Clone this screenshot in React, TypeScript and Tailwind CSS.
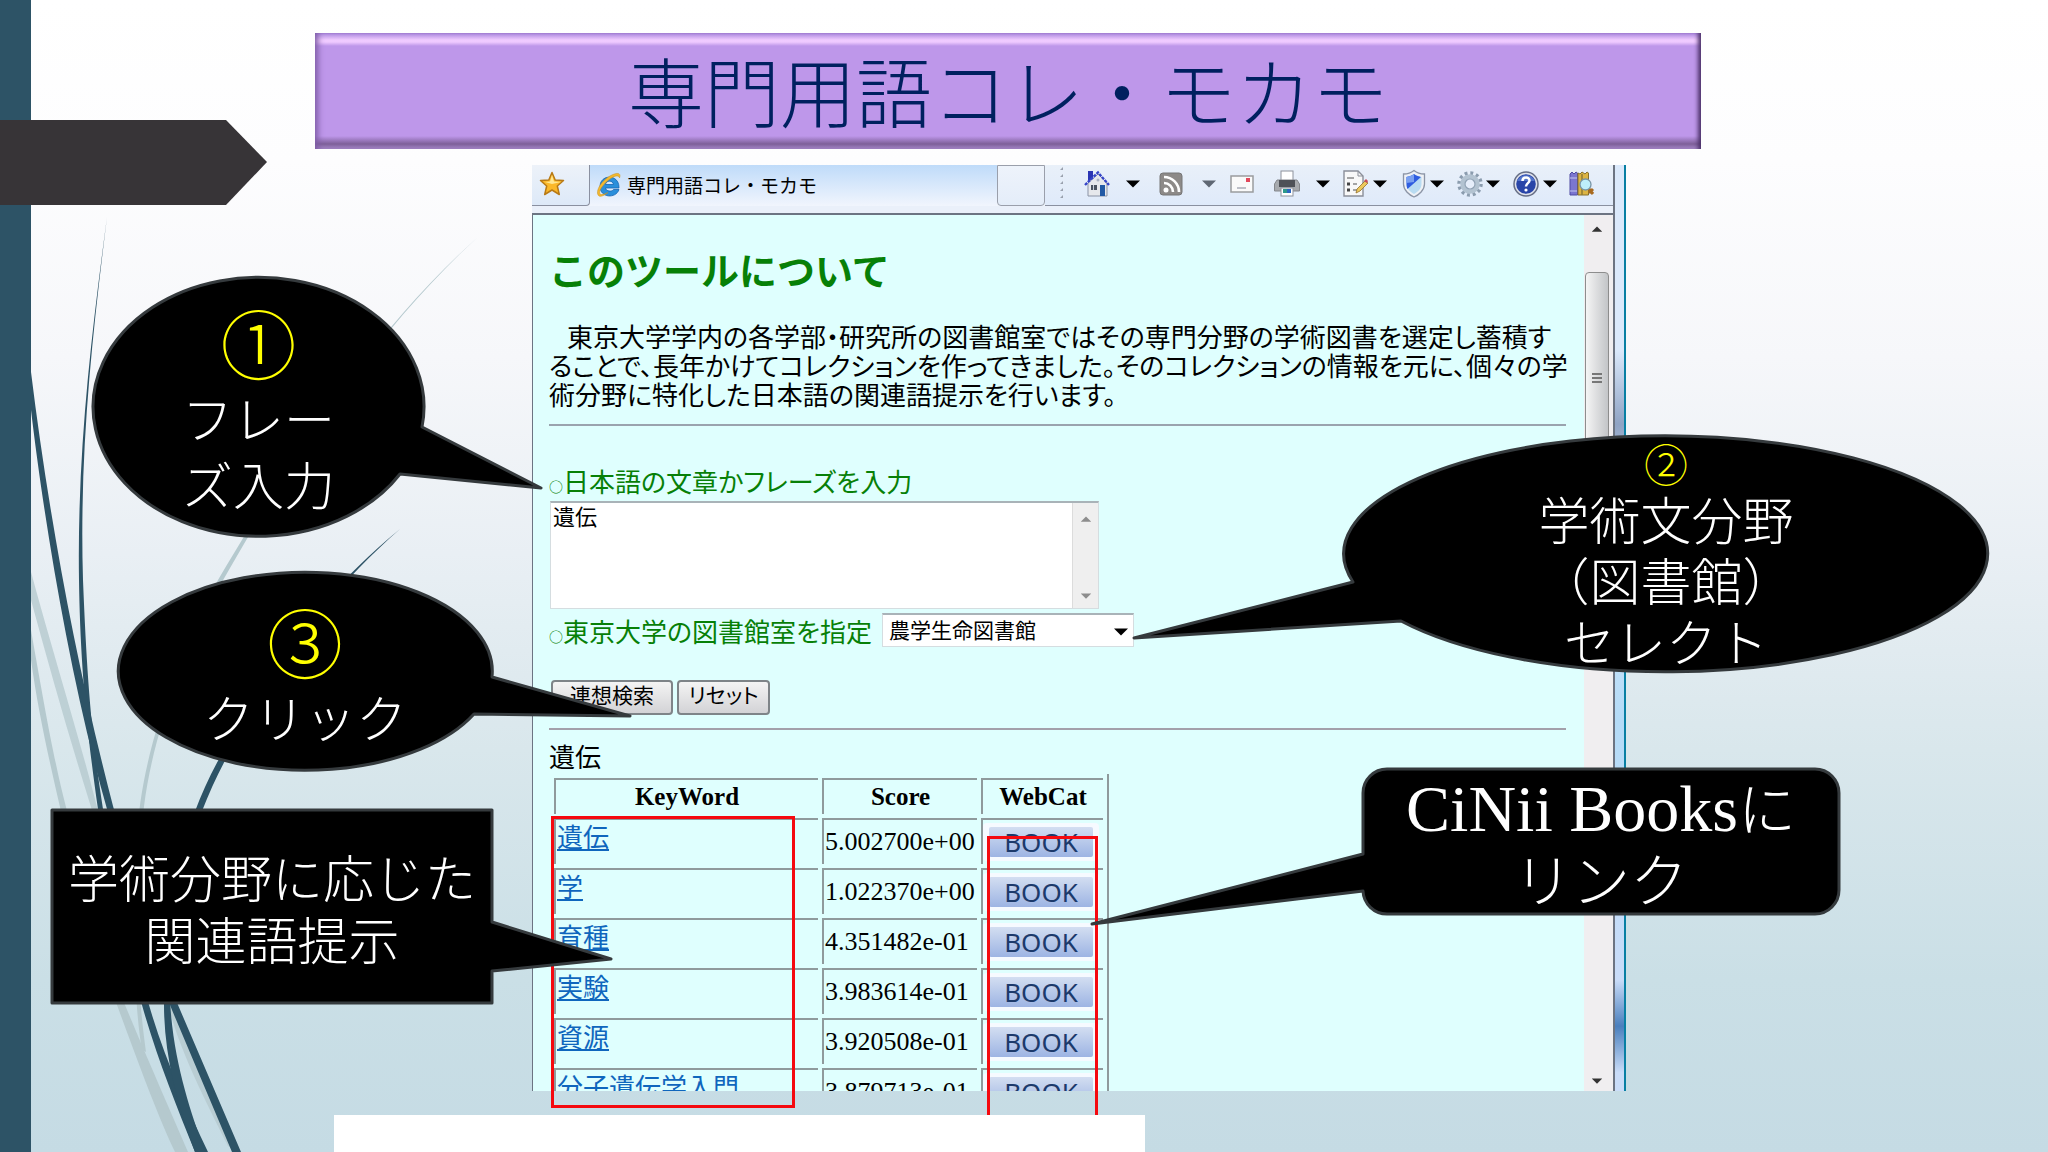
import type { ReactNode } from "react";

const jp = "font-['Noto_Sans_CJK_JP',sans-serif]";

function Caret({ className = "" }: { className?: string }) {
  return (
    <svg className={`block h-2 w-3.5 shrink-0 ${className}`} viewBox="0 0 14 8" aria-hidden="true">
      <path d="M0 0.5H14L7 7.5Z" fill="currentColor" />
    </svg>
  );
}

function Tool({ label, className = "", caret = "", caretColor = "text-black", children }: { label: string; className?: string; caret?: string; caretColor?: string; children: ReactNode }) {
  return (
    <button type="button" aria-label={label} className={`flex shrink-0 items-center ${className}`}>
      <svg className="block h-[30px] w-[26px]" viewBox="0 0 26 30" aria-hidden="true">{children}</svg>
      {caret && <Caret className={`${caret} ${caretColor}`} />}
    </button>
  );
}

function Toolbar() {
  return (
    <div className="flex shrink-0 items-center border-b border-[#8a90a0] bg-linear-to-b from-[#e9f0f9] to-[#dfeafa] pr-[18px] pb-[3px]">
      <svg className="ml-[15px] mr-5 block h-9 w-1" viewBox="0 0 4 36" aria-hidden="true">
        {[1, 8, 15, 22, 29].map((y) => <path key={y} d={`M3 ${y}V${y + 3}H0Z`} fill="#9aa1ae" />)}
      </svg>
      <Tool label="ホーム" caret="ml-4" className="mr-[18px]">
        <path d="M4 2H9V9L4 13Z" fill="#2a35b4" />
        <path d="M4 14L14 5L23 14V27H4Z" fill="#e6e8ec" stroke="#8b93a5" />
        <path d="M1 16L14 3.500L25 16" fill="none" stroke="#3544c8" strokeWidth="2.400" strokeDasharray="3 1" />
        <rect x="7" y="16" width="6" height="5" fill="#4a5260" />
        <rect x="9" y="16" width="1" height="5" fill="#c9d1dc" />
        <rect x="16" y="16" width="5" height="11" fill="#2159a5" />
        <circle cx="14" cy="11" r="1.500" fill="#aab2c2" />
      </Tool>
      <Tool label="フィード" caret="ml-[18px]" caretColor="text-[#5f6773]" className="mr-[13px]">
        <rect x="2" y="4" width="22" height="22" rx="3" fill="#8d8a88" stroke="#767676" />
        <circle cx="8" cy="21" r="2.500" fill="#fff" />
        <path d="M6 14A9 9 0 0 1 15 23M6 8A15 15 0 0 1 21 23" fill="none" stroke="#fff" strokeWidth="2.600" />
      </Tool>
      <Tool label="メール" className="mr-[19px]">
        <rect x="2" y="7" width="22" height="16" fill="#fafafa" stroke="#9a9c9e" strokeWidth="1.500" />
        <rect x="17" y="9" width="4" height="4" fill="#e2485c" />
        <path d="M8 19H17" stroke="#a8adb8" strokeWidth="1.500" />
      </Tool>
      <Tool label="印刷" caret="ml-4" className="mr-3">
        <rect x="7" y="2" width="12" height="12" fill="#fff" stroke="#8d929c" />
        <path d="M3 11H23L25.500 15V22H0.500V15Z" fill="#a7aaae" stroke="#84878c" />
        <rect x="5" y="11" width="16" height="7" fill="#4e5157" />
        <rect x="7" y="19" width="12" height="8" fill="#fff" stroke="#8d929c" />
        <rect x="9" y="20" width="4" height="4" fill="#2d9a8c" />
        <rect x="13" y="20" width="4" height="4" fill="#2c66c0" />
      </Tool>
      <Tool label="ページ" caret="ml-[5px]" className="mr-3.5">
        <path d="M2 2H16L21 7V27H2Z" fill="#f8f8f8" stroke="#8b8f99" strokeWidth="1.400" />
        <path d="M16 2V7H21" fill="none" stroke="#8b8f99" />
        <path d="M5 15H8M5 21H8" stroke="#444" strokeWidth="3" />
        <path d="M5 9H12M11 15H15M11 21H15" stroke="#888" strokeWidth="1.500" />
        <path d="M14 24L15 20L23 12L26 14L18 22Z" fill="#edc95d" stroke="#92702c" strokeWidth="0.800" />
        <path d="M22 12L24 10L26 12L25 14Z" fill="#c94b5c" />
      </Tool>
      <Tool label="セーフティ" caret="ml-[3px]" className="mr-[13px]">
        <path d="M13 1.500C16 4 20 5 23.500 5V15C23.500 21 18 26 13 28C8 26 2.500 21 2.500 15V5C6 5 10 4 13 1.500Z" fill="#eef1f6" stroke="#8c95a6" strokeWidth="1.300" />
        <path d="M13 5C15.500 7 18 7.500 20.500 8V15C20.500 20 16.500 23 13 25C9.500 23 5.500 20 5.500 15V8C8 7.500 10.500 7 13 5Z" fill="#b9dcf2" />
        <path d="M13 5C15.500 7 18 7.500 20 8L6.500 20C5.800 18 5.500 17 5.500 15V8C8 7.500 10.500 7 13 5Z" fill="#2f5de0" />
        <path d="M13 5V13L5.500 14V8C8 7.500 10.500 7 13 5Z" fill="#7aa0f0" />
      </Tool>
      <Tool label="ツール" caret="ml-[3px]" className="mr-[13px]">
        <circle cx="13" cy="15" r="11" fill="none" stroke="#8b9cae" strokeWidth="3.500" strokeDasharray="2.880 2.880" />
        <circle cx="13" cy="15" r="7.500" fill="#dfe8f1" stroke="#b3c3d1" strokeWidth="4.500" />
        <circle cx="13" cy="15" r="5" fill="#e6eefa" stroke="#8fa1b3" strokeWidth="1.200" />
      </Tool>
      <Tool label="ヘルプ" caret="ml-1" className="mr-3">
        <circle cx="13" cy="15" r="12" fill="#dfe2ea" stroke="#666e85" strokeWidth="1.500" />
        <circle cx="13" cy="15" r="9.800" fill="#2945a8" />
        <path d="M4 12A10 10 0 0 1 22 12Z" fill="#5274cb" />
        <path d="M9.500 12C9.500 7.500 16.500 7.500 16.500 11.500C16.500 14 13 14.500 13 17.500" fill="none" stroke="#fff" strokeWidth="2.500" />
        <circle cx="13" cy="21" r="1.600" fill="#fff" />
      </Tool>
      <Tool label="リサーチ">
        <path d="M1 5L3 3L5 5L7 3L8.500 4V26H1Z" fill="#7b76d0" stroke="#4e4ba3" />
        <path d="M1 9H8M1 22H8" stroke="#c5c8f2" />
        <path d="M9 4L11 5L13 3L16 5L18 3L19.500 4V26H9Z" fill="#dcb443" stroke="#85702f" />
        <path d="M13 5V26" stroke="#8f7a35" strokeWidth="1.500" />
        <path d="M20 20L24 25M24 20L20 24" stroke="#a86a1f" strokeWidth="3" />
        <circle cx="16.500" cy="15.500" r="5.500" fill="#bdeefa" stroke="#7894a5" strokeWidth="1.300" />
      </Tool>
    </div>
  );
}

function TabBar() {
  return (
    <div className="flex h-[41px] bg-[#f0f5fc]">
      <button type="button" aria-label="お気に入り" className="flex w-[58px] shrink-0 items-center rounded-br border-r border-b border-[#8a90a0] bg-linear-to-b from-[#edf2f9] to-[#dde9f8] pb-[3px] pl-[7px]">
        <svg className="block h-[26px] w-[26px]" viewBox="0 0 26 26" aria-hidden="true">
          <path d="M13 1.500L16.200 9L24.500 9.500L18.300 15L20.300 23.500L13 19L5.700 23.500L7.700 15L1.500 9.500L9.800 9Z" fill="#fbb829" stroke="#b87a16" strokeWidth="1.500" strokeLinejoin="round" />
          <path d="M13 4L15 10.500L22 11L13 13L6 11L11 10.500Z" fill="#ffe793" />
        </svg>
      </button>
      <div className="flex min-w-0 flex-1 items-center gap-[5px] bg-linear-to-b from-[#bfdbf9] to-[#f1f5fd] pb-0.5 pl-1.5 text-[19px] leading-7">
        <svg className="block h-[26px] w-[26px] shrink-0" viewBox="0 0 26 26" aria-hidden="true">
          <path d="M23 16H9.500C10 19.500 16 20 17.500 17.500H23C20 27 4 26 4 14.500C4 2 23.500 1.500 23 16ZM9.500 12.500H17.500C17 8 10 8 9.500 12.500Z" fill="#2a8fdb" stroke="#1765b1" strokeWidth="0.800" />
          <path d="M3 24C-2 20 6 7 17 2.500C23 0 25 2 23.500 6C23 2.500 18 3.500 12 8.500C5 14.500 1 22 5.500 22.500C8 22.500 10 21.500 12 20.500C8 23.500 5 25 3 24Z" fill="#f2b92f" stroke="#c98d16" strokeWidth="0.500" />
        </svg>
        <span className="whitespace-nowrap">専門用語コレ・モカモ</span>
      </div>
      <button type="button" aria-label="新しいタブ" className="w-12 shrink-0 rounded-b border border-[#9a9fab] bg-linear-to-b from-[#eef3fb] to-[#e4edf9]" />
      <Toolbar />
    </div>
  );
}

const rows = [
  ["遺伝", "5.002700e+00"],
  ["学", "1.022370e+00"],
  ["育種", "4.351482e-01"],
  ["実験", "3.983614e-01"],
  ["資源", "3.920508e-01"],
  ["分子遺伝学入門", "3.879713e-01"],
];

function Results() {
  return (
    <table className="mt-0.5 ml-px table-fixed border-separate border-spacing-1 border-r-2 border-[#8f9a9c] font-['Liberation_Serif',serif] text-[26px] leading-8">
      <colgroup>
        <col className="w-[264px]" />
        <col className="w-[155px]" />
        <col className="w-[122px]" />
      </colgroup>
      <thead>
        <tr className="h-9">
          {["KeyWord", "Score", "WebCat"].map((h) => (
            <th key={h} scope="col" className="border-t-2 border-l-2 border-[#8f9a9c] p-0 text-[25px] font-bold">{h}</th>
          ))}
        </tr>
      </thead>
      <tbody>
        {rows.map(([word, score]) => (
          <tr key={word} className="h-[46px]">
            <td className={`border-t-2 border-l-2 border-[#8f9a9c] px-px py-0 align-top ${jp}`}>
              <a href="#book" className="text-[#0f66bd] underline underline-offset-2">{word}</a>
            </td>
            <td className="border-t-2 border-l-2 border-[#8f9a9c] px-px py-0">{score}</td>
            <td className="border-t-2 border-l-2 border-[#8f9a9c] p-0">
              <div className="mr-1 rounded bg-[#f6faff] px-1.5 py-1">
                <a href="#book" className="block rounded-xs bg-linear-to-b from-[#d3def1] to-[#9db4e3] text-center font-['Noto_Sans',sans-serif] leading-[30px] text-[#1c3a6b]">BOOK</a>
              </div>
            </td>
          </tr>
        ))}
      </tbody>
    </table>
  );
}

function Page() {
  return (
    <div className="min-w-0 flex-1 overflow-hidden bg-[#dffffe] pt-[34px] pr-[18px] pl-4 text-[26px]">
      <h2 className="text-[38px] leading-10 font-bold text-[#078007]">このツールについて</h2>
      <p className="mt-8 leading-[29px] whitespace-nowrap [font-feature-settings:'palt']">
        <span className="pl-[18px]">東京大学学内の各学部・研究所の図書館室ではその専門分野の学術図書を選定し蓄積す</span><br />
        ることで、長年かけてコレクションを作ってきました。そのコレクションの情報を元に、個々の学<br />
        術分野に特化した日本語の関連語提示を行います。
      </p>
      <hr className="mt-4 border-t-2 border-[#9aa3ae]" />
      <form onSubmit={(e) => e.preventDefault()}>
        <label htmlFor="phrase" className="mt-[39px] block leading-8 text-[#078007] [font-feature-settings:'palt']">
          <span className="text-sm">○</span>日本語の文章かフレーズを入力
        </label>
        <div className="mt-1 ml-px flex h-[108px] w-[549px] border border-t-2 border-[#d5dde0] border-t-[#a9b3b8] bg-white">
          <textarea id="phrase" defaultValue="遺伝" className="min-w-0 flex-1 resize-none overflow-hidden px-0.5 text-[22px] leading-6 outline-none" />
          <div className="flex w-[26px] flex-col items-center justify-between border-l border-[#dcdcdc] bg-[#efefef] pt-3 pb-2 text-[#8d8d8d]">
            <Caret className="scale-75 rotate-180" />
            <Caret className="scale-75" />
          </div>
        </div>
        <div className="mt-1 flex h-[34px] items-center gap-2.5">
          <label htmlFor="library" className="text-[#078007] [font-feature-settings:'palt']"><span className="text-sm">○</span>東京大学の図書館室を指定</label>
          <div className="relative">
            <select id="library" className="block h-[34px] w-[252px] appearance-none border border-t-2 border-[#d5dde0] border-t-[#a9b3b8] bg-white pb-1 pl-1.5 text-[21px] leading-7">
              <option>農学生命図書館</option>
            </select>
            <Caret className="pointer-events-none absolute top-[15px] right-1.5" />
          </div>
        </div>
        <div className="mt-[33px] ml-0.5 flex h-[35px] gap-1 text-[21px] leading-6">
          <button type="submit" className="w-[122px] rounded border-2 border-[#7e8488] bg-linear-to-b from-[#f4f4f4] to-[#d3d3d6] pb-2">連想検索</button>
          <button type="reset" className="w-[93px] rounded border-2 border-[#7e8488] bg-linear-to-b from-[#f4f4f4] to-[#d3d3d6] pb-2 [font-feature-settings:'palt']">リセット</button>
        </div>
      </form>
      <hr className="mt-[13px] border-t-2 border-[#a3a0aa]" />
      <p className="mt-2.5 leading-8">遺伝</p>
      <Results />
    </div>
  );
}

function BrowserWindow() {
  return (
    <section className={`mt-4 mr-[422px] ml-[501px] flex min-h-0 flex-1 overflow-hidden ${jp} font-normal text-black`}>
      <div className="flex min-w-0 flex-1 flex-col">
        <TabBar />
        <div className="h-[7px] shrink-0 bg-[#eaf0fa]" />
        <div className="flex min-h-0 flex-1 border-t-2 border-l border-[#6c7482]">
          <Page />
          <div className="flex w-[29px] shrink-0 flex-col items-center bg-[#f0eef0] pt-2.5 pr-1">
            <Caret className="scale-75 rotate-180 text-[#333]" />
            <div className="mt-[39px] flex h-[212px] w-6 flex-col items-center justify-center gap-0.5 rounded-sm border border-[#8d8d8d] bg-linear-to-r from-[#f5f5f5] to-[#c3c5c8]">
              {[0, 1, 2].map((i) => <span key={i} className="h-0.5 w-2.5 bg-[#777]" />)}
            </div>
            <Caret className="mt-auto mb-1.5 scale-75 text-[#333]" />
          </div>
        </div>
      </div>
      <div className="w-[13px] shrink-0 border-r-2 border-l-2 border-r-[#087fa3] border-l-[#6c7482] bg-[linear-gradient(to_bottom,#dbe9fb_0%,#dbe9fb_20%,#8fa3c4_28%,#dbe9fb_38%,#b4dbf7_60%,#c9dcf8_88%,#4a7fbd_93%,#c9dcf8_98%)]" />
    </section>
  );
}

function Swooshes() {
  return (
    <svg className="pointer-events-none absolute top-0 left-0 h-[1152px] w-[560px]" viewBox="0 0 560 1152" aria-hidden="true">
      <g fill="#b5c9ce">
        <path d="M479 236C370 335 286 470 222 582C176 672 142 760 141 850C138 940 136 980 146 1052L142 1050C133 1000 134 920 137 840C140 760 172 670 218 580C284 468 369 334 479 236Z" />
        <path d="M31 572C55 660 80 740 97 807C115 870 145 950 175 1010C195 1060 215 1110 235 1150L228 1146C200 1090 180 1050 168 1005C140 940 110 880 91 807C70 740 50 670 31 600Z" fillOpacity=".8" />
        <path d="M31 630C45 710 55 765 66 807C80 870 100 950 125 1005C150 1065 170 1110 188 1152H175C155 1110 130 1040 117 1005C95 940 70 860 60 807C48 755 38 710 31 660Z" />
      </g>
      <g fill="#2d5366">
        <path d="M107 217C93 330 79 450 83 580C87 680 92 740 103 809C112 870 130 945 149 1005C165 1060 186 1105 208 1152H195C176 1105 156 1055 142 1005C122 945 105 870 98 809C85 720 80 650 79 580C77 450 92 330 107 217Z" />
        <path d="M31 372C48 510 75 660 113 806C134 880 152 944 178 1005L241 1152H232L172 1010C144 940 122 870 107 809C70 680 44 520 31 410Z" />
        <path d="M400 529C330 590 265 675 228 755C190 825 166 910 170 1000C173 1060 190 1110 205 1152H195C175 1100 164 1050 164 1005C161 915 183 820 223 752C263 672 325 590 400 529Z" />
      </g>
    </svg>
  );
}

function Callout({ box, viewBox, d, text, children }: { box: string; viewBox: string; d: string; text: string; children: ReactNode }) {
  return (
    <div className={`absolute ${box}`}>
      <svg className="absolute inset-0 h-full w-full overflow-visible" viewBox={viewBox} aria-hidden="true">
        <path d={d} fill="#000" stroke="#353a3d" strokeWidth="3" strokeLinejoin="round" />
      </svg>
      <div className={`relative flex flex-col items-center text-center whitespace-nowrap text-white ${text}`}>{children}</div>
    </div>
  );
}

export default function App() {
  return (
    <main className={`relative flex h-screen overflow-hidden bg-[linear-gradient(to_bottom,#ffffff_0%,#fdfdfe_14%,#f6f7fa_31%,#e9eff4_48%,#d9e7ec_65%,#cadfe6_85%,#c5dbe4_100%)] ${jp} font-light`}>
      <div className="w-[31px] shrink-0 bg-[#2d5366]" />
      <Swooshes />
      <svg className="absolute top-[120px] left-0 h-[85px] w-[268px]" viewBox="0 0 268 85" aria-hidden="true">
        <path d="M0 0H226L267 42L226 85H0Z" fill="#373437" />
      </svg>

      <div className="flex min-w-0 flex-1 flex-col">
        <h1 className="mt-[33px] mr-[347px] ml-[284px] bg-[linear-gradient(to_bottom,#a986dd_0px,#f0cbff_7px,#efcaff_9px,#be97ea_13px,#be97ea_calc(100%-13px),#7d5f98_calc(100%-5px),#a88aca_100%)] pt-2 pb-3 text-center text-[76px] leading-24 font-light text-[#00205f] shadow-[inset_7px_0_6px_-4px_#7d5ba5,inset_-6px_0_4px_-3px_#4b3169]">
          専門用語コレ・モカモ
        </h1>
        <BrowserWindow />
        <div className="mt-6 mr-[903px] ml-[303px] h-[37px] shrink-0 bg-white" />
      </div>

      <div className="absolute top-[816px] left-[551px] h-[292px] w-[244px] border-3 border-[#f5090f]" />
      <div className="absolute top-[836px] left-[987px] h-[279px] w-[111px] border-3 border-b-0 border-[#f5090f]" />

      <Callout box="left-[93px] top-[278px] h-[260px] w-[331px]" viewBox="93 277 331 260" d="M422 426L541 487L400 473A165.500 129.500 0 1 1 422 426Z" text="pt-5 text-[51px] leading-[66px]">
        <span className="text-[76px] leading-[86px] text-[#ffff00]">①</span>
        <span>フレー<br />ズ入力</span>
      </Callout>
      <Callout box="left-[118px] top-[573px] h-[198px] w-[374px]" viewBox="118 572 374 198" d="M492 676L630 715L474 713A187 99 0 1 1 492 676Z" text="pt-6 text-[51px] leading-[66px]">
        <span className="text-[76px] leading-[86px] text-[#ffff00]">③</span>
        <span>クリック</span>
      </Callout>
      <Callout box="left-[51px] top-[809px] h-[195px] w-[442px]" viewBox="51 809 442 195" d="M52 810H492V922L611 959L492 971V1003H52Z" text="pt-9 text-[51px] leading-[62px]">
        <span>学術分野に応じた<br />関連語提示</span>
      </Callout>
      <Callout box="left-[1344px] top-[437px] h-[236px] w-[644px]" viewBox="1343 436 644 236" d="M1400 620L1133 637L1352 581A322 118 0 1 1 1400 620Z" text="pt-px text-[51px] leading-[61px]">
        <span className="text-[44px] leading-[50px] text-[#ffff00]">②</span>
        <span>学術文分野<br />（図書館）<br />セレクト</span>
      </Callout>
      <Callout box="left-[1362px] top-[768px] h-[147px] w-[478px]" viewBox="1362 768 478 147" d="M1363 891L1092 924L1363 854V793A24 24 0 0 1 1387 769H1815A24 24 0 0 1 1839 793V890A24 24 0 0 1 1815 914H1387A24 24 0 0 1 1363 891Z" text="pt-1 text-[58px] leading-[69px]">
        <span><span className="font-['Liberation_Serif',serif] text-[66px]">CiNii Books</span>に<br />リンク</span>
      </Callout>
    </main>
  );
}
